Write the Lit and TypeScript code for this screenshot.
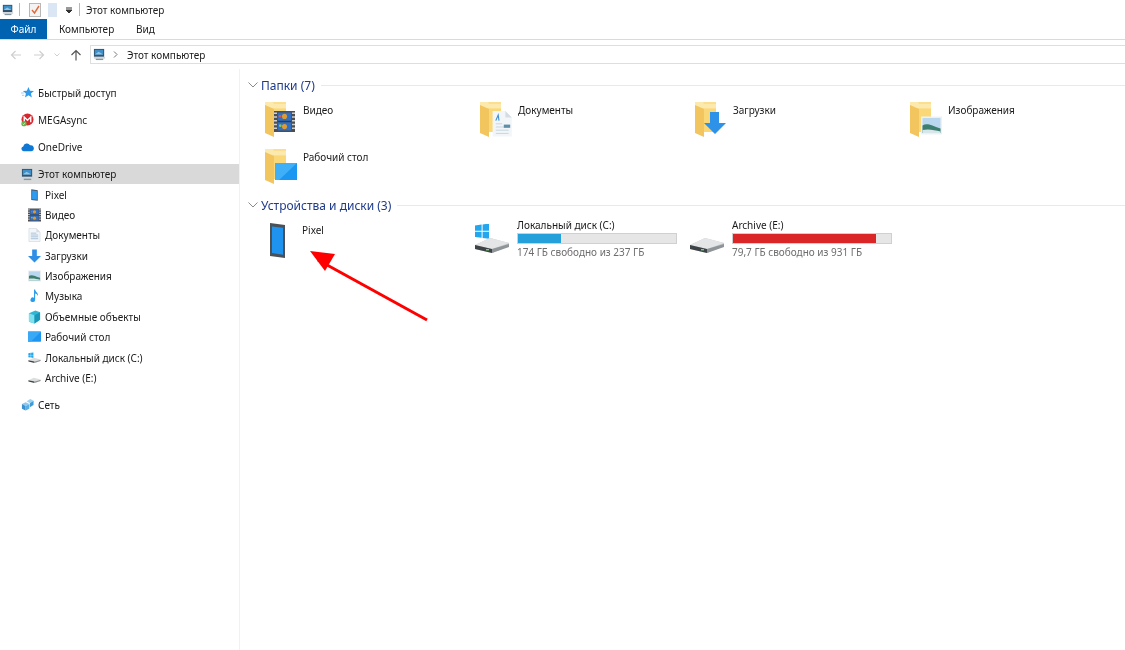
import { LitElement, html, css, svg } from "lit";
import { customElement } from "lit/decorators.js";

const pc = (s = 14) => html`<svg width=${s} height=${s} viewBox="0 0 14 14"><rect x="1" y="1" width="11" height="8.5" fill="#33536f"/><rect x="2" y="2" width="9" height="5" fill="#3f8fc9"/><path d="M2 7l4-3 5 3z" fill="#8ec6ea"/><rect x="1" y="9.5" width="12" height="2" fill="#cfd6dc"/><rect x="3" y="11.5" width="8" height="1.5" fill="#8795a1"/></svg>`;
const phone = (s = 16) => html`<svg width=${s} height=${s} viewBox="0 0 16 16"><path d="M4 1l8 1v13l-8-1z" fill="#4a5560"/><path d="M5 2.5l6 .7v10.6l-6-.7z" fill="#2d9bf0"/></svg>`;
const film = svg`<rect x="0" y="0" width="14" height="14" fill="#4e4e4e"/><rect x="2.5" y="1" width="9" height="12" fill="#2f6fc4"/><path d="M0 1.5h2M0 4h2M0 6.5h2M0 9h2M0 11.5h2M12 1.5h2M12 4h2M12 6.5h2M12 9h2M12 11.5h2" stroke="#cfcfcf" stroke-width="1"/><rect x="2.5" y="6.5" width="9" height="1" fill="#3a3a3a"/><circle cx="7" cy="3.6" r="1.7" fill="#e29a2a"/><circle cx="7" cy="10.4" r="1.7" fill="#e29a2a"/><circle cx="4" cy="3.5" r=".9" fill="#d65a5a"/><circle cx="4.2" cy="9.8" r=".9" fill="#7fc46a"/>`;
const docS = svg`<path d="M1 0h8l4 4v10H1z" fill="#f4f7fa" stroke="#c9d2da" stroke-width=".6"/><path d="M9 0l4 4H9z" fill="#d5dde4"/><path d="M3 5h6M3 7h8M3 9h8M3 11h8" stroke="#8fb0cf" stroke-width=".8"/>`;
const arrowS = svg`<path d="M4.5 0h5v7H14l-7 7-7-7h4.5z" fill="#2e8fe6"/>`;
const picS = svg`<rect x="0" y="1" width="14" height="12" fill="#eef1f3"/><rect x="1" y="2" width="12" height="10" fill="#b9d8ef"/><path d="M1 7c3-2 6 0 12 2v3H1z" fill="#3d7f6f"/><path d="M1 10c4-1 8 0 12 1v1H1z" fill="#d7e6ea"/>`;
const deskS = svg`<rect x="0" y="1" width="14" height="11" rx=".6" fill="#1e96f0"/><path d="M0 1h14L3 12H0z" fill="#3aa9f5"/>`;
const icon = (c: any, s = 14) => html`<svg width=${s} height=${s} viewBox="0 0 14 14">${c}</svg>`;
const disk = (win: boolean) => html`<svg class="disk" width="36" height="30" viewBox="0 0 36 30">
  ${win ? svg`<path d="M1 1.5l6.6-1v6.2H1zM8.600 .4L15 -.4v7.100H8.600zM1 7.700h6.600v6.100L1 13zM8.600 7.700H15v7.100l-6.400-.9z" fill="#22a7ee"/>` : ""}
  <path d="M1 21l15-7 19 5v3L18 29 1 25z" fill="#c9cbcc"/><path d="M1 21l17 4 17-6-19-5z" fill="#e4e5e6"/><path d="M1 21l17 4v4L1 25z" fill="#3d4346"/><path d="M18 25l17-5v3l-17 6z" fill="#8e9497"/><rect x="12" y="25" width="3" height="1.400" fill="#6fd36b"/></svg>`;
const folder = (o: any) => html`<svg class="fold" width="34" height="36" viewBox="0 0 34 36">
  <path d="M0 1h21v30H0z" fill="#fbdf8f"/><path d="M0 1h8l1 2h12v4H0z" fill="#fce9ae"/><path d="M0 4l9 4v28l-9-4z" fill="#f2c55e"/><path d="M9 8h12v23H9z" fill="#fad877"/>
  ${o}</svg>`;

const quick = html`<svg width="14" height="14" viewBox="0 0 14 14"><path d="M8 .5l1.700 4 4.300.3-3.300 2.800 1 4.200L8 9.500l-3.700 2.300 1-4.200L2 4.800l4.300-.3z" fill="#2f9bea"/><path d="M0 7h3M1 9.500h2.500" stroke="#9dcdf0"/></svg>`;
const mega = html`<svg width="14" height="14" viewBox="0 0 14 14"><circle cx="7" cy="6.500" r="6.500" fill="#d9272e"/><path d="M3.500 9.500V3.800L7 7.200l3.500-3.400v5.700" fill="none" stroke="#fff" stroke-width="1.500"/><circle cx="3.200" cy="11" r="2.800" fill="#6ab04c"/><path d="M1.800 11l1 1 1.800-2" fill="none" stroke="#fff" stroke-width=".7"/></svg>`;
const cloud = html`<svg width="15" height="10" viewBox="0 0 15 10"><path d="M3 10a2.800 2.800 0 0 1-.4-5.500A4.200 4.200 0 0 1 10.400 3 3.400 3.400 0 0 1 12 10z" fill="#0f78d4"/></svg>`;
const net = html`<svg width="14" height="14" viewBox="0 0 14 14"><path d="M1 6l4-2 4 2-4 2z" fill="#8cc8ef"/><path d="M1 6l4 2v5l-4-2z" fill="#3a8fcf"/><path d="M5 8l4-2v5l-4 2z" fill="#5aaee6"/><path d="M6 3l4-2.500 3.500 2L9.500 5z" fill="#9ad3f2"/><path d="M9.500 5l4-2.500v4.500l-4 2.500z" fill="#3f9ad8"/></svg>`;

const subs: [any, string][] = [
  [phone(14), "Pixel"],
  [icon(film), "Видео"],
  [icon(docS), "Документы"],
  [icon(arrowS), "Загрузки"],
  [icon(picS), "Изображения"],
  [html`<svg width="14" height="14" viewBox="0 0 14 14"><path d="M6.500 0h1.200c.3 3 3.800 3.500 2.800 7-.4-1.600-1.500-2.500-2.800-2.800V11a2.500 2.500 0 1 1-1.200-2.100z" fill="#2a9be8"/></svg>`, "Музыка"],
  [html`<svg width="14" height="14" viewBox="0 0 14 14"><path d="M1 3l7-3 5 2v8l-6 4-6-2z" fill="#2fb8d6"/><path d="M1 3l6 2v9l-6-2z" fill="#7fe0ee"/><path d="M7 5l6-3v8l-6 4z" fill="#1c96b8"/></svg>`, "Объемные объекты"],
  [icon(deskS), "Рабочий стол"],
  [html`<svg width="14" height="14" viewBox="0 0 36 30">${svg`<path d="M1 1.500l6.600-1v6.200H1zM8.600 .4L15 -.4v7.100H8.600zM1 7.700h6.600v6.100L1 13zM8.600 7.700H15v7.100l-6.400-.9z" fill="#22a7ee"/><path d="M1 21l17 4 17-6-19-5z" fill="#dcdddd"/><path d="M1 21l17 4v4L1 25z" fill="#3d4346"/><path d="M18 25l17-5v3l-17 6z" fill="#8e9497"/>`}</svg>`, "Локальный диск (C:)"],
  [html`<svg width="14" height="14" viewBox="0 0 36 30">${svg`<path d="M1 21l17 4 17-6-19-5z" fill="#dcdddd"/><path d="M1 21l17 4v4L1 25z" fill="#3d4346"/><path d="M18 25l17-5v3l-17 6z" fill="#8e9497"/>`}</svg>`, "Archive (E:)"],
];

const folders: [string, any][] = [
  ["Видео", svg`<g transform="translate(9 10) scale(1.500)">${film}</g>`],
  ["Документы", svg`<g transform="translate(11 10) scale(1.600)"><path d="M1 0h8l4 4v12H1z" fill="#f3f6f9"/><path d="M9 0l4 4H9z" fill="#d5dde4"/><path d="M3 8h4M3 10h8M3 12h8M3 14h8" stroke="#c4d3e0" stroke-width=".6"/><rect x="8" y="8.500" width="4" height="2" fill="#5d8fa8"/><path d="M3 6l1.500-3.500L5 6" stroke="#3d8ed0" stroke-width=".7" fill="none"/></g>`],
  ["Загрузки", svg`<path d="M15 11h9v11h7L20 33 9 22h6z" fill="#2e92e8"/>`],
  ["Изображения", svg`<g transform="translate(11 14) scale(1.500)">${picS}</g>`],
  ["Рабочий стол", svg`<rect x="10" y="15" width="22" height="17" fill="#1b97f2"/><path d="M10 15h22L14 32h-4z" fill="#3fb0f8"/>`],
];

@customElement("app-root")
export class AppRoot extends LitElement {
  static styles = css`
    :host { display: flex; flex-direction: column; width: 1125px; height: 650px; background: #fff; overflow: hidden; position: relative;
      font-family: "Noto Sans", sans-serif; font-size: 10px; color: #1a1a1a; filter: blur(.35px); }
    .title { height: 19px; display: flex; align-items: center; padding-left: 2px; color: #222; }
    .sep { width: 1px; height: 13px; background: #b9b9b9; }
    .s1 { margin: 0 9px 0 6px; } .s2 { margin: 0 6px 0 6px; }
    .doc-a { width: 12px; height: 14px; }
    .doc-b { margin-left: 7px; width: 9px; height: 14px; background: #dbe6f4; }
    .drop { margin-left: 8px; width: 8px; height: 8px; }
    .tabs { height: 20px; display: flex; align-items: stretch; border-bottom: 1px solid #dadada; }
    .tab { display: flex; align-items: center; }
    .file { width: 47px; justify-content: center; background: #0063b1; color: #fff; }
    .comp { margin-left: 12px; width: 77px; }
    .nav { margin-top: 5px; height: 19px; display: flex; align-items: center; }
    .navbtns { width: 90px; position: relative; display: flex; align-items: center; padding-left: 10px; box-sizing: border-box; gap: 11px; }
    .addr { flex: 1; height: 19px; box-sizing: border-box; border: 1px solid #dedede; border-right: 0; display: flex; align-items: center; padding-left: 2px; gap: 6px; }
    .chev { color: #777; }
    .body { flex: 1; display: flex; margin-top: 5px; }
    .side { width: 249px; border-right: 1.500px solid #f1f1f1; box-sizing: content-box; padding-top: 14px; }
    .row { height: 20.4px; display: flex; align-items: center; padding-left: 21px; gap: 4px; }
    .row .ic { width: 13px; display: flex; justify-content: center; align-items: center; }
    .row.sub { padding-left: 28px; }
    .row.sel { background: #d9d9d9; }
    .gap { margin-top: 6.6px; }
    .main { flex: 1; padding: 6px 0 0 8px; }
    .head { display: flex; align-items: center; height: 20px; color: #1e3a8a; font-size: 12px; }
    .head svg { margin-right: 3px; }
    .head .line { flex: 1; height: 1px; background: #e9e9e9; margin-left: 6px; }
    .grid { display: grid; grid-template-columns: repeat(4, 215px); grid-auto-rows: 47px; padding: 6px 0 0 17px; }
    .tile { display: flex; align-items: flex-start; }
    .tile .fold { flex: none; margin-right: 4px; }
    .tile span { margin-top: 2px; }
    .devs { display: flex; padding: 8px 0 0 21px; }
    .dev-phone { width: 205px; display: flex; align-items: flex-start; }
    .dev-phone span { margin: 0 0 0 16px; padding-top: 0; }
    .drv { width: 215px; display: flex; align-items: flex-start; }
    .drv .disk { flex: none; margin: 1px 7px 0 0; }
    .drv .disk.nudge { margin-right: 6px; }
    .info { width: 160px; margin-top: -5px; }
    .bar { height: 11px; background: #e6e6e6; border: 1px solid #d0d0d0; box-sizing: border-box; margin: 1px 0; }
    .fill { height: 100%; }
    .mut { color: #6d6d6d; }
    .arrow { position: absolute; left: 300px; top: 240px; }
  `;

  render() {
    return html`
      <div class="title">
        ${pc(12)}
        <div class="sep s1" style="margin-left:5px"></div>
        <svg class="doc-a" viewBox="0 0 12 14"><rect x=".5" y=".5" width="11" height="13" fill="#f3f3f3" stroke="#b8b8b8"/><path d="M3 7l2.500 3L10 3" fill="none" stroke="#e2683a" stroke-width="1.400"/></svg>
        <div class="doc-b"></div>
        <svg class="drop" viewBox="0 0 8 8"><path d="M1 2h6M1 4l3 3 3-3z" stroke="#333" fill="#333"/></svg>
        <div class="sep s2"></div>
        <span>Этот компьютер</span>
      </div>
      <div class="tabs">
        <div class="tab file">Файл</div>
        <div class="tab comp">Компьютер</div>
        <div class="tab">Вид</div>
      </div>
      <div class="nav">
        <div class="navbtns">
          <svg width="12" height="10" viewBox="0 0 12 10"><path d="M11 5H1.500M5.500 1L1.500 5l4 4" fill="none" stroke="#cfcfcf" stroke-width="1.200"/></svg>
          <svg width="12" height="10" viewBox="0 0 12 10"><path d="M1 5h9.500M6.500 1l4 4-4 4" fill="none" stroke="#cfcfcf" stroke-width="1.200"/></svg>
          <svg width="6" height="4" viewBox="0 0 6 4" style="margin-left:-2px"><path d="M.5 .5L3 3 5.500 .5" fill="none" stroke="#cfcfcf"/></svg>
          <svg width="12" height="12" viewBox="0 0 12 12" style="margin-left:-1px"><path d="M6 11.500V1.500M1.500 6L6 1.500 10.500 6" fill="none" stroke="#555" stroke-width="1.200"/></svg>
        </div>
        <div class="addr">
          ${pc(13)}
          <svg width="5" height="7" viewBox="0 0 5 7" style="margin:0 3px 0 1px"><path d="M1 .5l3 3-3 3" fill="none" stroke="#777"/></svg>
          <span>Этот компьютер</span>
        </div>
      </div>
      <div class="body">
        <div class="side">
          <div class="row"><span class="ic">${quick}</span><span>Быстрый доступ</span></div>
          <div class="row gap"><span class="ic">${mega}</span><span>MEGAsync</span></div>
          <div class="row gap"><span class="ic">${cloud}</span><span>OneDrive</span></div>
          <div class="row sel gap"><span class="ic">${pc(13)}</span><span>Этот компьютер</span></div>
          ${subs.map(([i, t]) => html`<div class="row sub"><span class="ic">${i}</span><span>${t}</span></div>`)}
          <div class="row gap"><span class="ic">${net}</span><span>Сеть</span></div>
        </div>
        <div class="main">
          <div class="head">
            <svg width="10" height="6" viewBox="0 0 10 6"><path d="M.5 .5L5 5 9.500 .5" fill="none" stroke="#8a8a8a"/></svg>
            <span>Папки (7)</span><div class="line"></div>
          </div>
          <div class="grid">
            ${folders.map(([t, o]) => html`<div class="tile">${folder(o)}<span>${t}</span></div>`)}
          </div>
          <div class="head">
            <svg width="10" height="6" viewBox="0 0 10 6"><path d="M.5 .5L5 5 9.500 .5" fill="none" stroke="#8a8a8a"/></svg>
            <span>Устройства и диски (3)</span><div class="line"></div>
          </div>
          <div class="devs">
            <div class="dev-phone">
              <svg width="17" height="35" viewBox="0 0 17 35"><path d="M1 0l15 2v33L1 33z" fill="#4a5158"/><path d="M3 3.500l11 1.300v27L3 30z" fill="#1f93f0"/></svg>
              <span>Pixel</span>
            </div>
            <div class="drv">
              ${disk(true)}
              <div class="info"><div>Локальный диск (C:)</div><div class="bar"><div class="fill" style="width:27.5%;background:#26a0da"></div></div><div class="mut">174 ГБ свободно из 237 ГБ</div></div>
            </div>
            <div class="drv">
              ${disk(false)}
              <div class="info"><div>Archive (E:)</div><div class="bar"><div class="fill" style="width:90.500%;background:#da2626"></div></div><div class="mut">79,7 ГБ свободно из 931 ГБ</div></div>
            </div>
          </div>
        </div>
      </div>
      <svg class="arrow" width="135" height="85" viewBox="0 0 135 85"><path d="M127 80L18 20" stroke="#f00" stroke-width="3" fill="none"/><path d="M10 11l25 3-10 17z" fill="#f00"/></svg>
    `;
  }
}
